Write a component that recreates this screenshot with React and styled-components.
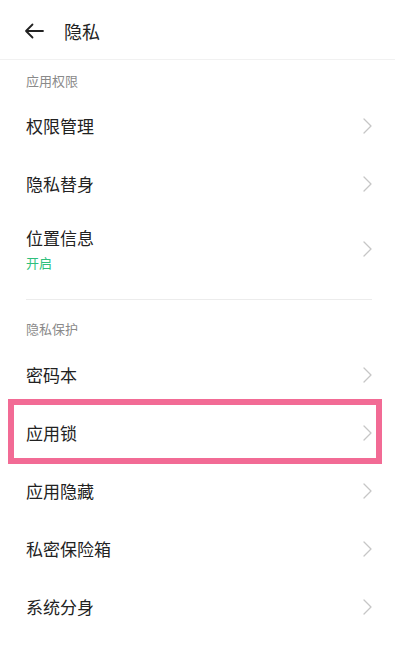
import React from "react";
import styled, { createGlobalStyle } from "styled-components";

const GlobalStyle = createGlobalStyle`
  html, body {
    margin: 0;
    padding: 0;
    background: #ffffff;
  }
  body {
    font-family: "Noto Sans CJK SC", "Noto Sans", sans-serif;
    color: #222222;
  }
`;

const sections = [
  {
    title: "应用权限",
    items: [
      { label: "权限管理" },
      { label: "隐私替身" },
      { label: "位置信息", sub: "开启" },
    ],
  },
  {
    title: "隐私保护",
    items: [
      { label: "密码本" },
      { label: "应用锁", highlighted: true },
      { label: "应用隐藏" },
      { label: "私密保险箱" },
      { label: "系统分身" },
    ],
  },
];

function Chevron() {
  return (
    <svg width="9" height="16" viewBox="0 0 9 16" fill="none">
      <polyline points="1,1 8,8 1,15" stroke="#c6c6c6" strokeWidth="1.3" strokeLinejoin="round" strokeLinecap="round" />
    </svg>
  );
}

export default function App() {
  return (
    <Page>
      <GlobalStyle />
      <Header>
        <BackButton>
          <svg width="20" height="16" viewBox="0 0 20 16" fill="none">
            <path d="M19 8H2M8.5 1.5L2 8l6.5 6.5" stroke="#222" strokeWidth="1.8" strokeLinecap="round" strokeLinejoin="round" />
          </svg>
        </BackButton>
        <Title>隐私</Title>
      </Header>
      {sections.map((section, i) => (
        <Section key={section.title}>
          {i > 0 && <Divider />}
          <SectionTitle $first={i === 0}>{section.title}</SectionTitle>
          {section.items.map((item) => (
            <Row key={item.label} $tall={!!item.sub} $highlighted={item.highlighted}>
              <RowText>
                <RowLabel>{item.label}</RowLabel>
                {item.sub && <RowSub>{item.sub}</RowSub>}
              </RowText>
              <Chevron />
            </Row>
          ))}
        </Section>
      ))}
    </Page>
  );
}

const Page = styled.div`
  width: 395px;
  min-height: 648px;
  background: #ffffff;
`;

const Header = styled.div`
  height: 59px;
  display: flex;
  align-items: center;
  padding: 0 0 0 24px;
  border-bottom: 1px solid #f1f1f1;
  box-sizing: content-box;
`;

const BackButton = styled.div`
  width: 20px;
  height: 16px;
  display: flex;
  align-items: center;
  margin-right: 20px;
  margin-top: 2px;
`;

const Title = styled.div`
  font-size: 18px;
  line-height: 24px;
  color: #222222;
  margin-top: 3px;
`;

const Section = styled.div`
  display: flex;
  flex-direction: column;
`;

const Divider = styled.div`
  height: 1px;
  background: #ececec;
  margin: 0 23px 0 26px;
`;

const SectionTitle = styled.div`
  font-size: 13px;
  line-height: 18px;
  color: #8a8a8a;
  padding: ${(p) => (p.$first ? "12px 26px 7px" : "20px 26px 8px")};
`;

const Row = styled.div`
  position: relative;
  height: ${(p) => (p.$tall ? "72px" : "58px")};
  display: flex;
  align-items: center;
  justify-content: space-between;
  padding: ${(p) => (p.$tall ? "0 23px 14px 26px" : "0 23px 0 26px")};
  box-sizing: content-box;
  ${(p) =>
    p.$highlighted &&
    `
    &::after {
      content: "";
      position: absolute;
      top: -5px;
      bottom: -2px;
      left: 8px;
      right: 13px;
      border: 6px solid #f26b95;
      pointer-events: none;
    }
  `}
`;

const RowText = styled.div`
  display: flex;
  flex-direction: column;
  gap: 4px;
`;

const RowLabel = styled.div`
  font-size: 17px;
  line-height: 24px;
  color: #222222;
`;

const RowSub = styled.div`
  font-size: 13px;
  line-height: 18px;
  color: #2fbf7c;
`;
